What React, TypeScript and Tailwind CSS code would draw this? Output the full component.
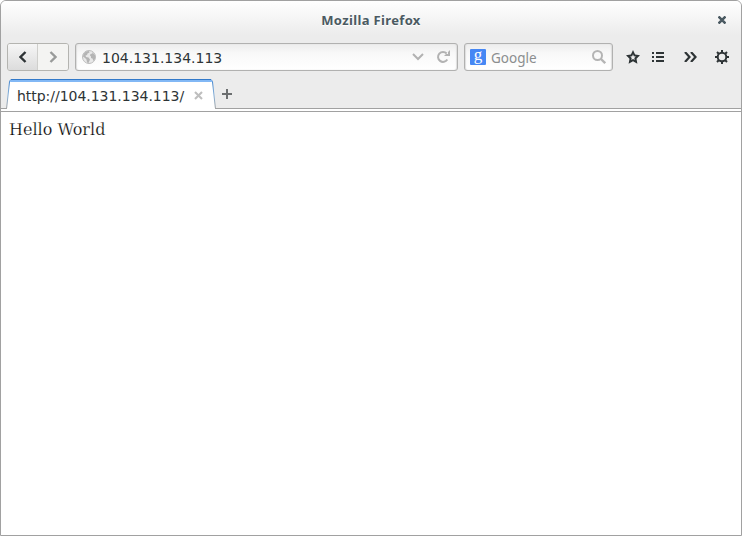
import React from "react";

const ui = "font-['Noto_Sans','Open_Sans',sans-serif]";

function Globe() {
  return (
    <svg width="14" height="14" viewBox="0 0 14 14" className="ml-[6px] shrink-0">
      <circle cx="7" cy="7" r="6.5" fill="#e8e8e8" stroke="#bcbcbc" />
      <path d="M1 6.500L1.500 4L4 1.500L7 1L7.500 2.500L5.500 3.500L5 5L3.500 5.500L4 7L6.500 7.500L8 9.500L6.500 13L5 12.500L4.500 9.500L3 8zM10 2l3 3v4l-1.500 2-1-2.500L9 8V6.500L8 5.500l.5-1.500 2-.5z" fill="#b4b4b4" />
    </svg>
  );
}

function Gear() {
  return (
    <svg width="14" height="14" viewBox="0 0 14 14" fill="none" stroke="#2e3436">
      <circle cx="7" cy="7" r="4.300" strokeWidth="2" />
      <path d="M7 0v2.500M7 11.500V14M0 7h2.500M11.500 7H14M2 2l2 2M10 10l2 2M12 2l-2 2M4 10l-2 2" strokeWidth="2" />
    </svg>
  );
}

function TitleBar() {
  return (
    <div className="flex h-[34px] shrink-0 items-center bg-linear-to-b from-white to-[#ececec] pr-[15px]">
      <div className="w-[23px]" />
      <h1 className="flex-1 pt-[4px] text-center text-[13px] leading-[20px] font-bold text-[#4b5a62] [text-shadow:0_1px_#fff]">
        <span className="inline-block tracking-[0.35px]">Mozilla Firefox</span>
      </h1>
      <svg width="8" height="8" viewBox="0 0 8 8" className="mt-[4px]">
        <path d="M.5.5l7 7M7.500.5l-7 7" stroke="#4b5a62" strokeWidth="2.500" />
      </svg>
    </div>
  );
}

function Toolbar() {
  return (
    <div className="flex h-[36px] shrink-0 items-end pl-[6px]">
      <div className="flex h-[28px] w-[62px] shrink-0 overflow-hidden rounded-[3px] border border-[#b4b4b0]">
        <button className="flex w-[30px] items-center justify-center border-r border-[#cfcfcc] bg-linear-to-b from-[#f6f6f6] to-[#dcdcdc]">
          <svg width="8" height="12" viewBox="0 0 8 12"><path d="M6.500 1L1.500 6l5 5" fill="none" stroke="#2e3436" strokeWidth="2.400" /></svg>
        </button>
        <button className="flex flex-1 items-center justify-center bg-[#f4f4f2]">
          <svg width="8" height="12" viewBox="0 0 8 12"><path d="M1.500 1L6.500 6l-5 5" fill="none" stroke="#999b9a" strokeWidth="2.400" /></svg>
        </button>
      </div>
      <div className="ml-[6px] flex h-[28px] w-[383px] shrink-0 items-center rounded-[3px] border border-[#b1b1b0] bg-linear-to-b from-[#ededed] via-[#f8f8f8] via-35% to-white shadow-[inset_1px_0_1px_#ddd,inset_-1px_0_1px_#ddd]">
        <Globe />
        <span className="ml-[6px] flex-1 pt-[2px] font-['DejaVu_Sans',sans-serif] text-[14px] leading-5 text-[#2e3436]">104.131.134.113</span>
        <svg width="12" height="8" viewBox="0 0 12 8" className="mr-[12px]"><path d="M1 1l5 5 5-5" fill="none" stroke="#b2b2b2" strokeWidth="2" /></svg>
        <svg width="14" height="14" viewBox="0 0 14 14" className="mr-[7px]">
          <path d="M10.700 3.500A5 5 0 1 0 11.300 9.500" fill="none" stroke="#b2b2b2" strokeWidth="2" />
          <path d="M14 0v6H8l2-2h2V2z" fill="#b2b2b2" />
        </svg>
      </div>
      <div className="ml-[6px] flex h-[28px] w-[149px] shrink-0 items-center rounded-[3px] border border-[#b1b1b0] bg-linear-to-b from-[#ededed] via-[#f8f8f8] via-35% to-white pl-[5px] shadow-[inset_1px_0_1px_#ddd,inset_-1px_0_1px_#ddd]">
        <span className="flex h-[16px] w-[16px] items-center justify-center rounded-[1px] bg-[#4687f4] pb-[5px] font-['Liberation_Serif',serif] text-[17px] leading-none text-white">g</span>
        <span className="ml-[5px] flex-1 pt-[2px] text-[13.500px] leading-5 text-[#8b8e8f]">Google</span>
        <svg width="14" height="14" viewBox="0 0 14 14" className="mr-[6px]" fill="none" stroke="#b4b4b4"><circle cx="5.500" cy="5.500" r="4.500" strokeWidth="2" /><path d="M8.700 8.700l4.500 4.500" strokeWidth="2.300" /></svg>
      </div>
      <div className="flex h-[28px] flex-1 items-center pl-[13px]">
        <svg width="14" height="14" viewBox="0 0 14 14"><path fillRule="evenodd" d="M7 0l2.100 4.600L14 5.200l-3.500 3.500.9 5L7 11.300l-4.400 2.400.9-5L0 5.200l4.900-.6zM7 4.300L6.200 6.300 4.200 6.500 5.700 8 5.300 10 7 9.100 8.700 10 8.300 8 9.800 6.500 7.800 6.300z" fill="#2e3436" /></svg>
        <svg width="12" height="10" viewBox="0 0 12 10" className="ml-[12px]" fill="#2e3436"><path d="M0 0h2v2H0zM4 0h8v2H4zM0 4h2v2H0zM4 4h8v2H4zM0 8h2v2H0zM4 8h8v2H4z" /></svg>
        <svg width="13" height="10" viewBox="0 0 13 10" className="ml-[20px]"><path d="M1 0l4.500 5L1 10M7 0l4.500 5L7 10" fill="none" stroke="#2e3436" strokeWidth="2.200" /></svg>
        <span className="ml-[18px]"><Gear /></span>
      </div>
    </div>
  );
}

function TabBar() {
  return (
    <div className="relative flex h-[38px] shrink-0 items-end border-b border-[#a1a1a1]">
      <div className="relative -mb-px ml-[5px] flex h-[30px] w-[210px] items-center">
        <svg width="210" height="30" viewBox="0 0 210 30" className="absolute inset-0">
          <defs><linearGradient id="tabEdge" x1="0" y1="0" x2="0" y2="1"><stop stopColor="#3b80cc" /><stop offset=".5" stopColor="#81add8" /><stop offset="1" stopColor="#a1a1a1" /></linearGradient></defs>
          <path d="M.5 30L3.500 3Q3.700.5 6 .5H204Q206 .5 206.500 3L209.500 30z" fill="#fff" stroke="url(#tabEdge)" />
          <path d="M4.500 1h201l.5 2H4z" fill="#82b8f5" />
          <path d="M5 .5h200" stroke="#3279c9" />
          <path d="M1 29.500h208" stroke="#fff" />
        </svg>
        <span className="relative ml-[11px] w-[168px] pt-[4px] font-['DejaVu_Sans',sans-serif] text-[14px] leading-5 tracking-[-0.03px] whitespace-nowrap text-[#2e3436]">http://104.131.134.113/</span>
        <svg width="9" height="9" viewBox="0 0 9 9" className="relative ml-[9px] mt-[2px]"><path d="M1 1l7 7M8 1L1 8" stroke="#bebebe" strokeWidth="2.100" /></svg>
      </div>
      <svg width="10" height="10" viewBox="0 0 10 10" className="mb-[9px] ml-[6px]"><path d="M5 0v10M0 5h10" stroke="#6c6f70" strokeWidth="2" /></svg>
    </div>
  );
}

export default function App() {
  return (
    <main className={`${ui} flex h-[536px] w-[742px] flex-col overflow-hidden rounded-t-[6px] border border-[#a1a1a1] bg-[#ececec]`}>
      <TitleBar />
      <Toolbar />
      <TabBar />
      <div className="h-[2px] shrink-0 bg-white" />
      <section className="flex-1 border-t border-[#a1a1a1] bg-white px-[8px] pt-[8px]">
        <p className="font-['DejaVu_Serif',serif] text-[16px] leading-[20px] text-black [-webkit-text-stroke:0.25px_white]">Hello World</p>
      </section>
    </main>
  );
}
